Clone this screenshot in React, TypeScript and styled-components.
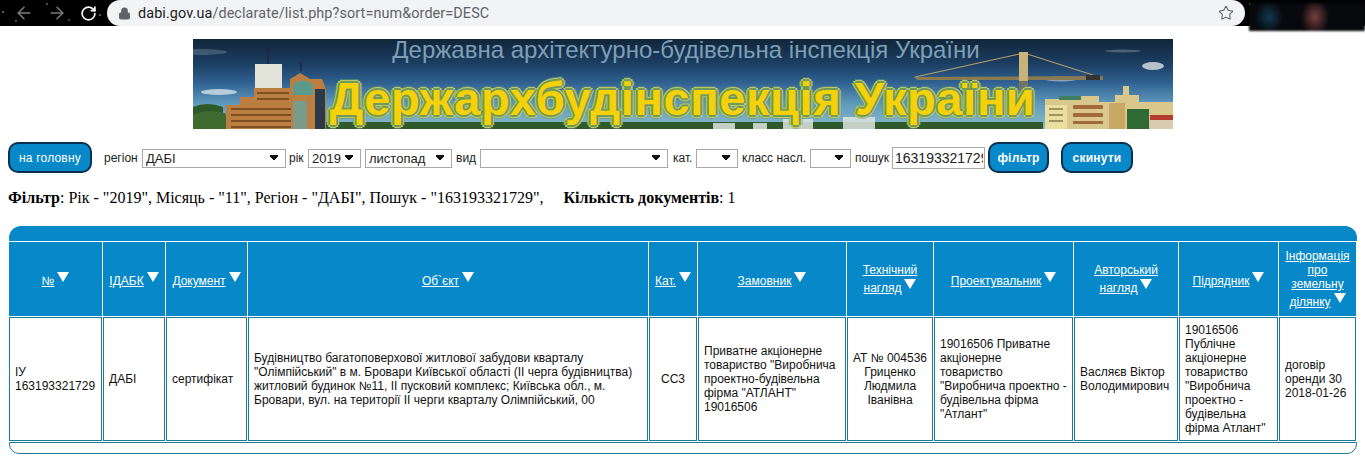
import React from "react";
import styled, { createGlobalStyle } from "styled-components";
import { ArrowLeft, ArrowRight, RotateCw, Star, Lock } from "lucide-react";

const Global = createGlobalStyle`
  html, body { margin: 0; padding: 0; background: #fff; }
  body { font-family: "Liberation Serif", serif; width: 1365px; height: 456px; overflow: hidden; }
`;

const Page = styled.div`
  display: flex;
  flex-direction: column;
  width: 1365px;
  height: 456px;
  overflow: hidden;
`;

/* Browser chrome */
const BrowserBar = styled.div`
  position: relative;
  display: flex;
  align-items: center;
  height: 26px;
  flex: none;
  padding-left: 14px;
  background-color: #000;
  background-image:
    radial-gradient(circle at 3px 12px, #777 0.6px, transparent 1px),
    radial-gradient(circle at 47px 4px, #666 0.6px, transparent 1px),
    radial-gradient(circle at 69px 20px, #555 0.6px, transparent 1px),
    radial-gradient(circle at 16px 21px, #666 0.6px, transparent 1px),
    radial-gradient(circle at 100px 15px, #777 0.6px, transparent 1px),
    radial-gradient(circle at 1250px 4px, #777 0.6px, transparent 1px);
`;
const NavButton = styled.span<{ $dim?: boolean; $w: number }>`
  display: flex;
  width: ${(p) => p.$w}px;
  color: ${(p) => (p.$dim ? "#7c7c7c" : "#fff")};
`;
const UrlPill = styled.div`
  display: flex;
  align-items: center;
  width: 1138px;
  height: 26px;
  margin-left: 1px;
  padding: 0 11px;
  box-sizing: border-box;
  background: #f1f3f4;
  border-radius: 13px;
  font: 14.4px "Roboto", "Liberation Sans", sans-serif;
  color: #5f6368;
  letter-spacing: 0.1px;
`;
const UrlHost = styled.span`
  color: #202124;
`;
const UrlText = styled.span`
  flex: 1;
  margin-left: 7px;
`;
const StarIcon = styled(Star)`
  color: #5f6368;
`;
const Blurred = styled.div`
  position: absolute;
  left: 1249px;
  top: 3px;
  width: 116px;
  height: 28px;
  background:
    radial-gradient(ellipse 14px 18px at 66px 14px, #7a3f40, transparent),
    radial-gradient(ellipse 14px 16px at 20px 14px, #123a50, transparent),
    #08090c;
  filter: blur(1px);
`;

/* Banner */
const BannerRow = styled.div`
  display: flex;
  justify-content: center;
  padding-top: 13px;
`;
const Banner = styled.div`
  position: relative;
  width: 980px;
  height: 90px;
  overflow: hidden;
  display: flex;
  flex-direction: column;
  align-items: center;
  background: linear-gradient(180deg, #11263a 0%, #1c3f63 28%, #2f6090 48%, #5f9abd 72%, #8dbccb 100%);
`;
const BannerArt = styled.svg`
  position: absolute;
  inset: 0;
  width: 980px;
  height: 90px;
`;
const BannerSub = styled.div`
  position: relative;
  margin: 0 0 0 7px;
  font: 24px/22px "Liberation Sans", sans-serif;
  color: #7d9fb6;
  white-space: nowrap;
`;
const BannerTitle = styled.div`
  position: relative;
  margin: 9px 0 0 0;
  font: bold 47px/58px "Liberation Sans", sans-serif;
  letter-spacing: 0.6px;
  color: #f7d108;
  white-space: nowrap;
  text-shadow:
    1px 0 #6f9a58, -1px 0 #6f9a58, 0 1px #6f9a58, 0 -1px #6f9a58,
    2px 0 #6f9a58, -2px 0 #6f9a58, 0 2px #6f9a58, 0 -2px #6f9a58,
    3px 0 #bcc868, -3px 0 #bcc868, 0 3px #bcc868, 0 -3px #bcc868,
    2px 2px #bcc868, -2px 2px #bcc868, 2px -2px #bcc868, -2px -2px #bcc868,
    4px 0 #6f9a6888, -4px 0 #6f9a6888, 0 -4px #6f9a6888, 0 4px #6f9a6888;
`;

/* Filter controls */
const Controls = styled.form`
  display: flex;
  align-items: center;
  height: 31px;
  margin: 13px 0 0 8px;
`;
const RoundButton = styled.button<{ $w: number; $ml?: number; $bold?: boolean }>`
  width: ${(p) => p.$w}px;
  height: 31px;
  margin-left: ${(p) => p.$ml ?? 0}px;
  padding: 0;
  box-sizing: border-box;
  background: #0688c9;
  border: 2px solid #0b2f4f;
  border-radius: 10px;
  color: #fff;
  font: ${(p) => (p.$bold ? "bold" : "normal")} 12px "Liberation Sans", sans-serif;
  letter-spacing: 0.2px;
`;
const Label = styled.label<{ $ml: number; $w: number }>`
  width: ${(p) => p.$w}px;
  margin-left: ${(p) => p.$ml}px;
  font: 12px "Liberation Sans", sans-serif;
  color: #222;
  white-space: nowrap;
`;
const Select = styled.select<{ $w: number; $ml?: number }>`
  appearance: none;
  width: ${(p) => p.$w}px;
  height: 19px;
  margin: 2px 0 0 ${(p) => p.$ml ?? 0}px;
  padding: 0 0 0 3px;
  box-sizing: border-box;
  border: 1px solid #a9a9a9;
  border-radius: 0;
  background-color: #fff;
  background-image:
    linear-gradient(45deg, transparent 50%, #111 50%),
    linear-gradient(-45deg, transparent 50%, #111 50%);
  background-size: 4px 7px, 4px 7px;
  background-position: right 11px center, right 7px center;
  background-repeat: no-repeat;
  font: 13px "Liberation Sans", sans-serif;
  color: #222;
`;
const SearchInput = styled.input`
  width: 93px;
  height: 22px;
  margin: 1px 0 0 3px;
  padding: 0 1px 0 2px;
  box-sizing: border-box;
  border: 1px solid #a9a9a9;
  font: 14px "Liberation Sans", sans-serif;
  color: #222;
`;

/* Summary */
const Summary = styled.p`
  margin: 15px 0 0 8px;
  font: 16px/20px "Liberation Serif", serif;
  color: #000;
  white-space: pre;
`;

/* Table panel */
const Panel = styled.div`
  width: 1348px;
  margin: 18px 0 0 9px;
`;
const PanelTop = styled.div`
  height: 15px;
  background: #0688c9;
  border-radius: 12px 12px 0 0;
`;
const Table = styled.table`
  table-layout: fixed;
  width: 1349px;
  margin-left: -1px;
  border-collapse: separate;
  border-spacing: 1px;
`;
const HeadCell = styled.th`
  height: 74px;
  padding: 0 3px;
  box-sizing: border-box;
  background: #0688c9;
  font: normal 12px/14px "Liberation Sans", sans-serif;
  text-align: center;
  vertical-align: middle;
`;
const SortLink = styled.a`
  color: #fff;
  text-decoration: underline;
`;
const SortMark = styled.svg`
  margin-left: 3px;
`;
const BodyCell = styled.td<{ $center?: boolean }>`
  height: 124px;
  padding: 0 5px;
  box-sizing: border-box;
  background: #fff;
  border: 1px solid #1c7d96;
  font: 12px/14px "Liberation Sans", sans-serif;
  color: #111;
  text-align: ${(p) => (p.$center ? "center" : "left")};
  vertical-align: middle;
`;
const PanelBottom = styled.div`
  height: 12px;
  box-sizing: border-box;
  border: 1px solid #1c7d96;
  border-radius: 0 0 10px 10px;
`;

const columns: { w: number; head: React.ReactNode; body: React.ReactNode; center?: boolean }[] = [
  { w: 93, head: "№", body: "ІУ 163193321729" },
  { w: 62, head: "ІДАБК", body: "ДАБІ" },
  { w: 81, head: "Документ", body: "сертифікат" },
  { w: 400, head: "Об`єкт", body: "Будівництво багатоповерхової житлової забудови кварталу \"Олімпійський\" в м. Бровари Київської області (ІІ черга будівництва) житловий будинок №11, ІІ пусковий комплекс; Київська обл., м. Бровари, вул. на території ІІ черги кварталу Олімпійський, 00" },
  { w: 48, head: "Кат.", body: "СС3", center: true },
  { w: 148, head: "Замовник", body: "Приватне акціонерне товариство \"Виробнича проектно-будівельна фірма \"АТЛАНТ\" 19016506" },
  { w: 86, head: "Технічний нагляд", body: "АТ № 004536 Гриценко Людмила Іванівна", center: true },
  { w: 139, head: "Проектувальник", body: "19016506 Приватне акціонерне товариство \"Виробнича проектно - будівельна фірма \"Атлант\"" },
  { w: 104, head: "Авторський нагляд", body: "Васляєв Віктор Володимирович" },
  { w: 99, head: "Підрядник", body: "19016506 Публічне акціонерне товариство \"Виробнича проектно - будівельна фірма Атлант\"" },
  { w: 77, head: "Інформація про земельну ділянку", body: "договір оренди 30 2018-01-26" },
];

const Triangle = () => (
  <SortMark width="12" height="15" viewBox="0 0 12 15">
    <path d="M0 2h12L6 12z" fill="#fff" />
  </SortMark>
);

const Art = () => (
  <BannerArt viewBox="0 0 980 90">
    {/* clouds */}
    <g fill="#e8eef2">
      <ellipse cx="26" cy="53" rx="18" ry="3" opacity="0.7" />
      <ellipse cx="8" cy="13" rx="26" ry="3" opacity="0.2" />
      <ellipse cx="960" cy="27" rx="11" ry="4" opacity="0.75" />
      <ellipse cx="868" cy="40" rx="16" ry="2.5" opacity="0.5" />
      <ellipse cx="930" cy="12" rx="18" ry="1.5" opacity="0.25" />
    </g>
    {/* tree line */}
    <rect x="130" y="83" width="720" height="7" fill="#2f5a2c" />
    <path d="M0 68q14-6 30 0v22H0z" fill="#2e5a2a" />
    <path d="M0 76q18-8 36 0v14H0z" fill="#3f6a30" />
    {/* left buildings */}
    <path d="M62 25h27v24H62z" fill="#e2e4da" />
    <path d="M75 25V8M108 32V22" stroke="#223" strokeWidth="1.2" />
    <path d="M33 90V66h14v-8h14v-9h36v-9l10-6 10 6h12l4 10v40z" fill="#bb7f42" />
    <path d="M100 46q10-9 20 0v10h-20z" fill="#5c9a8c" />
    <path d="M100 62h14v28h-14z" fill="#7c9a88" />
    <path d="M122 50h10v40h-10z" fill="#2b3a4a" />
    <path d="M38 70h60M38 76h60M38 82h60M38 88h60M64 54h32M64 60h32" stroke="#6b3f1c" strokeWidth="1.7" />
    {/* crane */}
    <path d="M722 38 831 14l72 23" fill="none" stroke="#b8a56a" strokeWidth="1" />
    <path d="M720 38l190-1 0 4H725z" fill="#8a7a52" />
    <path d="M826 13h9v29h-9z" fill="#c8b378" />
    <path d="M826 42h9v30h-9z" fill="#8a7a52" opacity="0.7" />
    <path d="M893 36h14v5h-14z" fill="#333" />
    {/* right city */}
    <path d="M852 90V60h30v-3h24v6h16V56h8v-9h6v9h10v7h34v27z" fill="#d8c88c" />
    <path d="M866 57h22v4h-22z" fill="#3f8060" />
    <path d="M852 66h22v24h-22z" fill="#eadf9e" />
    <path d="M880 66h30v4h-30zM880 74h30v4h-30zM880 82h30v3h-30z" fill="#a06a3a" />
    <path d="M916 64h16v26h-16z" fill="#c9a864" />
    <path d="M934 70h22v20h-22z" fill="#2f6a35" />
    <path d="M957 76h23v5h-23z" fill="#b53a30" />
    <path d="M957 81h23v9h-23z" fill="#d8cdb0" />
    <path d="M856 70h14M856 76h14M856 82h14" stroke="#8a7a4a" strokeWidth="1.4" />
    {/* pale buildings along the river */}
    <path d="M520 84h22v6h-22zM560 84h14v6h-14zM650 78h32v12h-32zM590 80h30v10h-30z" fill="#dde4e0" opacity="0.85" />
  </BannerArt>
);

export default function App() {
  return (
    <Page>
      <Global />
      <BrowserBar>
        <NavButton $dim $w={33}><ArrowLeft size={20} strokeWidth={1.8} /></NavButton>
        <NavButton $dim $w={33}><ArrowRight size={20} strokeWidth={1.8} /></NavButton>
        <NavButton $w={26}><RotateCw size={17} strokeWidth={2.4} /></NavButton>
        <UrlPill>
          <Lock size={13} fill="#5f6368" strokeWidth={2} />
          <UrlText><UrlHost>dabi.gov.ua</UrlHost>/declarate/list.php?sort=num&amp;order=DESC</UrlText>
          <StarIcon size={16} strokeWidth={1.6} />
        </UrlPill>
        <Blurred />
      </BrowserBar>

      <BannerRow>
        <Banner>
          <Art />
          <BannerSub>Державна архітектурно-будівельна інспекція України</BannerSub>
          <BannerTitle>Держархбудінспекція України</BannerTitle>
        </Banner>
      </BannerRow>

      <Controls>
        <RoundButton type="button" $w={84}>на головну</RoundButton>
        <Label $ml={12} $w={38}>регіон</Label>
        <Select $w={144} defaultValue="d"><option value="d">ДАБІ</option></Select>
        <Label $ml={3} $w={19}>рік</Label>
        <Select $w={53} defaultValue="y"><option value="y">2019</option></Select>
        <Select $w={87} $ml={4} defaultValue="m"><option value="m">листопад</option></Select>
        <Label $ml={4} $w={24}>вид</Label>
        <Select $w={188}><option></option></Select>
        <Label $ml={5} $w={23}>кат.</Label>
        <Select $w={42}><option></option></Select>
        <Label $ml={4} $w={68}>класс насл.</Label>
        <Select $w={41}><option></option></Select>
        <Label $ml={4} $w={34}>пошук</Label>
        <SearchInput defaultValue="163193321729" />
        <RoundButton type="button" $w={61} $ml={3} $bold>фільтр</RoundButton>
        <RoundButton type="button" $w={72} $ml={12} $bold>скинути</RoundButton>
      </Controls>

      <Summary>
        <b>Фільтр</b>: Рік - "2019", Місяць - "11", Регіон - "ДАБІ", Пошук - "163193321729",{"     "}<b>Кількість документів</b>: 1
      </Summary>

      <Panel>
        <PanelTop />
        <Table>
          <colgroup>
            {columns.map((c, i) => <col key={i} width={c.w} />)}
          </colgroup>
          <thead>
            <tr>
              {columns.map((c, i) => (
                <HeadCell key={i}>
                  <SortLink href="#">{c.head}</SortLink>
                  <Triangle />
                </HeadCell>
              ))}
            </tr>
          </thead>
          <tbody>
            <tr>
              {columns.map((c, i) => (
                <BodyCell key={i} $center={c.center}>{c.body}</BodyCell>
              ))}
            </tr>
          </tbody>
        </Table>
        <PanelBottom />
      </Panel>
    </Page>
  );
}
